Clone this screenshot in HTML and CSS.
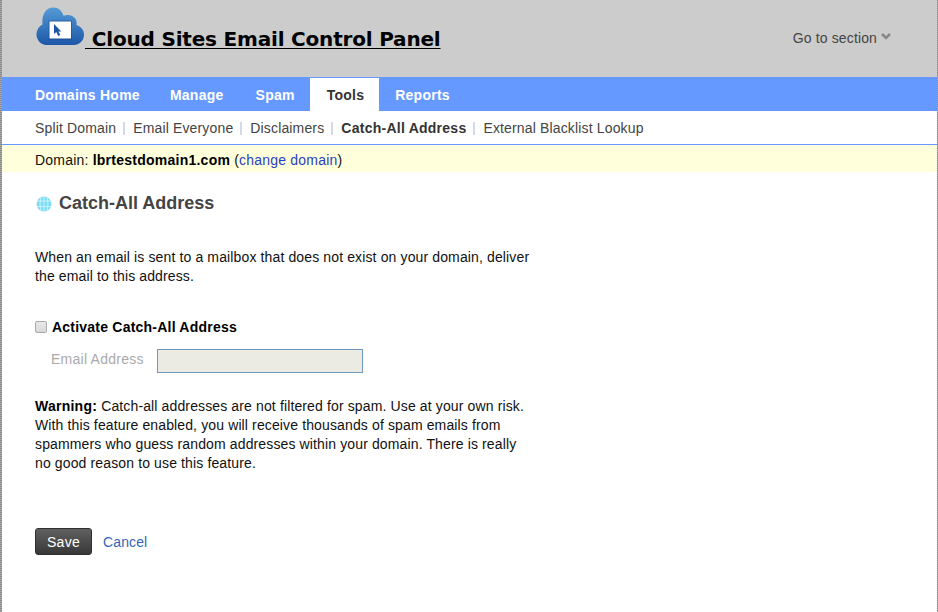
FILE: index.html
```html
<!DOCTYPE html>
<html lang="en"><head><meta charset="utf-8"><title>Catch-All Address</title><link rel="stylesheet" href="styles.css"></head>
<body><div class="page">
<header class="top"><a class="brand" href="#"><svg class="logo" width="50" height="40" viewBox="0 0 50 40"><defs><linearGradient id="g" x1="0" y1="0" x2="0" y2="1"><stop offset="0" stop-color="#559bd6"/><stop offset="1" stop-color="#1c57a8"/></linearGradient></defs><path fill="url(#g)" d="M10.500 38C4.500 38 .5 32.500 .5 27.500c0-4.500 2.500-8 6-10C5.500 8 9.500 .5 17.500 .5c5 0 8.500 3.500 10 8.200 7.500-2.700 14.500 2.300 13 9.300 4.500 1.500 7.500 5 7.500 9.500 0 6-4.500 10.500-10.500 10.500z"/><path fill="#164b91" opacity=".55" d="M12.500 13.500h23.500v19.500H12.500z"/><path fill="#fff" d="M13.500 14.500h21.500v17H13.500z"/><path fill="#1c55a5" d="M18 17v10l2.300-2 2 4 2-1-2-3.500h3z"/></svg><span class="title">&nbsp;Cloud Sites Email Control Panel</span></a>
<a class="goto">Go to section <svg width="10" height="7" viewBox="0 0 10 7"><path d="M1 1l4 4 4-4" fill="none" stroke="#888" stroke-width="2.600"/></svg></a></header>
<nav class="tabs"><a>Domains Home</a><a>Manage</a><a>Spam</a><a class="on">Tools</a><a>Reports</a></nav>
<nav class="sub"><a>Split Domain</a><i></i><a>Email Everyone</a><i></i><a>Disclaimers</a><i></i><a class="on">Catch-All Address</a><i></i><a>External Blacklist Lookup</a></nav>
<div class="domain">Domain: <b>lbrtestdomain1.com</b> (<a>change domain</a>)</div>
<main><h1><svg width="16" height="16" viewBox="0 0 16 16"><circle cx="8" cy="8" r="7.500" fill="#7edcf5"/><path d="M1 5h14M0 10.500h16M8 0v16M5 1q-2 7 0 14M11 1q2 7 0 14" stroke="#d5f6ff" stroke-width=".8" fill="none"/></svg>Catch-All Address</h1>
<p class="intro">When an email is sent to a mailbox that does not exist on your domain, deliver<br>the email to this address.</p>
<label class="activate"><span class="box"></span>Activate Catch-All Address</label>
<div class="field"><span>Email Address</span><input disabled></div>
<p class="warning"><b>Warning:</b> Catch-all addresses are not filtered for spam. Use at your own risk.<br>With this feature enabled, you will receive thousands of spam emails from<br>spammers who guess random addresses within your domain. There is really<br>no good reason to use this feature.</p>
<div class="actions"><button>Save</button><a>Cancel</a></div></main>
</div></body></html>
```
FILE: styles.css
```css
*{box-sizing:border-box}
body{margin:0;font:14px/19px "Liberation Sans",Arial,sans-serif;letter-spacing:.13px;color:#111;background:repeating-linear-gradient(#888 0 1px,#aaa 1px 2px)}
.page{height:612px;margin:0 1px 0 2px;background:#fff;overflow:hidden}
.top{height:77px;background:#ccc;display:flex;justify-content:space-between;padding:7px 46px 0 34px}
.brand{display:flex;color:#000;text-decoration:none}
.title{font:bold 20px/24px "DejaVu Sans",sans-serif;letter-spacing:-.19px;text-decoration:underline 1px;text-underline-offset:2px;margin:20px 0 0 -1px}
.goto{margin-top:22px;color:#444}
.goto svg{vertical-align:3px}
.tabs{height:34px;background:#69f;display:flex;padding:1px 0 0 17px}
.tabs a{padding:0 16px;line-height:34px;font-weight:700;color:#fff;letter-spacing:.25px}
.tabs a:first-child{padding-right:14px}
.tabs a:nth-child(3){padding-right:15px}
.tabs .on{background:#fff;color:#333;padding:0 15px 0 17px}
.sub{height:34px;border-bottom:1px solid #69f;display:flex;align-items:center;padding:1px 0 0 33px;color:#444;letter-spacing:.15px}
.sub i{width:2px;height:13px;background:#d3d9e8;margin:0 8px 0 7px}
.sub .on{font-weight:700;color:#333;letter-spacing:.25px}
.domain{height:27px;background:#ffffdb;padding-left:33px;line-height:30px;letter-spacing:.2px}
.domain b,.warning b{color:#000;letter-spacing:.25px}
.domain a{color:#2a3fc4}
main{padding:19px 33px}
h1{margin:0;font-size:18px;line-height:24px;letter-spacing:0;color:#444;display:flex;align-items:center;gap:7px;padding-left:1px}
h1 svg{margin-top:2px}
.intro{margin:33px 0 32px}
.activate{display:flex;align-items:center;gap:5px;font-weight:700;color:#000;letter-spacing:.22px}
.box{width:12px;height:12px;margin-bottom:1px;border:1px solid #aaa;border-radius:2px;background:linear-gradient(#e8e8e8,#d8d8d8)}
.field{display:flex;margin:12px 0 24px 16px;color:#aaa}
.field span{width:106px;padding-top:1px;letter-spacing:.25px}
.field input{width:206px;height:24px;border:1px solid #7098bd;background:#ebebe4}
.warning{margin:0}
.actions{display:flex;align-items:center;gap:11px;margin-top:55px;color:#36b}
.actions a{padding-top:1px}
button{width:57px;height:27px;border:1px solid #303030;border-radius:3px;background:linear-gradient(#606060,#383838);color:#fff;font:14px "Liberation Sans",sans-serif;letter-spacing:.3px;padding:0}
```
